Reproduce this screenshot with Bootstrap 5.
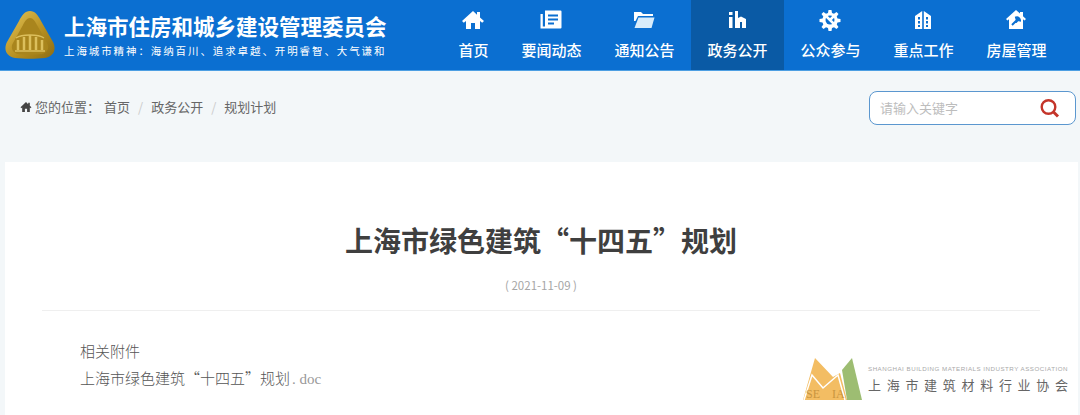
<!DOCTYPE html>
<html lang="zh-CN">
<head>
  <meta charset="UTF-8">
  <title>上海市绿色建筑“十四五”规划</title>
  <link href="https://cdn.jsdelivr.net/npm/bootstrap@5.3.3/dist/css/bootstrap.min.css" rel="stylesheet">
  <style>
    body {
      background: #f3f7f9;
      font-family: "Noto Sans CJK SC", "Liberation Sans", sans-serif;
      height: 415px;
      overflow: hidden;
      position: relative;
    }
    .site-head {
      background: #0b6fd1;
      height: 71px;
      border-bottom: 1px solid #4d9fe3;
    }
    .site-logo { width: 52px; height: 50px; margin-left: 4px; margin-right: 8px; }
    .site-title { color: #fff; font-size: 21.5px; font-weight: 700; line-height: 26px; white-space: nowrap; }
    .site-motto { color: #fff; font-size: 10.5px; letter-spacing: 1.9px; line-height: 14px; margin-top: 5px; white-space: nowrap; }
    .head-nav { margin-right: 17px; }
    .head-link {
      color: #fff;
      font-size: 15px;
      font-weight: 500;
      text-decoration: none;
      padding: 9px 16.5px 0;
      line-height: 20px;
    }
    .head-link svg { width: 22px; height: 22px; display: block; margin-bottom: 9px; }
    .head-link.current { background: #0a5aa5; }
    .crumb-row { height: 91px; padding: 0 4px 17px 20px; }
    .crumb-row .breadcrumb { font-size: 13px; color: #666; margin: 0 0 2px; line-height: 20px; }
    .crumb-row .breadcrumb-item a { color: #666; text-decoration: none; }
    .crumb-row .breadcrumb-item.active { color: #666; }
    .crumb-row .breadcrumb-item + .breadcrumb-item { padding-left: 8px; }
    .crumb-row .breadcrumb-item + .breadcrumb-item::before { color: #ccc; padding-right: 8px; }
    .crumb-label { margin-right: 4px; }
    .crumb-home { width: 12px; height: 12px; margin: 0 3px 2px 0; }
    .find-box {
      width: 207px;
      height: 34px;
      background: #fff;
      border: 1px solid #5b97cf;
      border-radius: 8px;
      padding: 0 15px 0 10px;
    }
    .find-box input {
      border: 0;
      outline: 0;
      font-size: 13px;
      min-width: 0;
      width: 150px;
      padding: 0;
      background: transparent;
    }
    .find-box input::placeholder { color: #bdbdbd; }
    .find-box svg { width: 21px; height: 21px; }
    .doc-sheet {
      background: #fff;
      margin: 0 2px 0 5px;
      height: 253px;
      padding: 0 38px 0 37px;
    }
    .doc-title {
      font-size: 28px;
      font-weight: 700;
      color: #3f3f3f;
      line-height: 40px;
      padding-top: 58px;
      margin: 0;
      height: 98px;
      box-sizing: border-box;
    }
    .doc-date { color: #a6a6a6; font-size: 11.5px; line-height: 18px; margin-top: 16px; height: 34px; }
    .doc-body {
      border-top: 1px solid #efefef;
      padding: 26px 0 0 38px;
      font-size: 15px;
      line-height: 27px;
      color: #555;
      font-weight: 300;
    }
    .doc-ext { color: #999; font-family: "Liberation Serif", serif; font-weight: 400; margin-left: 2px; }
    .assoc-mark {
      position: absolute;
      left: 803px;
      top: 357px;
    }
    .assoc-mark svg { width: 60px; height: 44px; margin-right: 5px; }
    .assoc-en { font-family: "Liberation Sans", sans-serif; font-size: 6.2px; letter-spacing: .5px; color: #a9a9a9; line-height: 8px; white-space: nowrap; }
    .assoc-zh { font-size: 13px; letter-spacing: 5.7px; color: #666; line-height: 16px; margin-top: 4px; white-space: nowrap; }
    .assoc-letters { font-family: "Liberation Serif", serif; font-size: 12px; fill: #c9953f; }
  </style>
</head>
<body>
  <header class="site-head d-flex justify-content-between">
    <div class="d-flex align-items-center">
      <svg class="site-logo" viewBox="0 0 52 50">
        <defs>
          <linearGradient id="goldFill" x1="0" y1="0" x2="1" y2="1">
            <stop offset="0" stop-color="#e6c75a"/>
            <stop offset=".6" stop-color="#b38c1e"/>
            <stop offset="1" stop-color="#8c6c14"/>
          </linearGradient>
        </defs>
        <path d="M26 1C21 1 18 5 15 11L3 32C-1 40 3 47 11 48C20 49 32 49 41 48C49 47 53 40 49 32L37 11C34 5 31 1 26 1Z" fill="url(#goldFill)"/>
        <path d="M26 8C23 8 21 11 19 15L9 33C6 38 9 43 14 44C22 45 30 45 38 44C43 43 46 38 43 33L33 15C31 11 29 8 26 8Z" fill="#a9851d"/>
        <path d="M14 40V30M20 40V27M26 40V25M32 40V27M38 40V30" stroke="#dcbf5c" stroke-width="2.500"/>
        <path d="M11 41H41" stroke="#dcbf5c" stroke-width="1.500"/>
        <path d="M12 28C18 24 34 24 40 28" stroke="#dcbf5c" stroke-width="1.500" fill="none"/>
      </svg>
      <div>
        <div class="site-title">上海市住房和城乡建设管理委员会</div>
        <div class="site-motto">上海城市精神：海纳百川、追求卓越、开明睿智、大气谦和</div>
      </div>
    </div>
    <nav class="head-nav d-flex">
      <a class="head-link d-flex flex-column align-items-center" href="#">
        <svg viewBox="0 0 22 22" fill="#fff"><path d="M11 2L0 12l1.800 1.800L4 12v8h5v-6h4v6h5v-8l2.200 1.800L22 12l-4-3.600V3h-3v2.800z"/></svg>
        首页
      </a>
      <a class="head-link d-flex flex-column align-items-center" href="#">
        <svg viewBox="0 0 22 22"><path d="M5 1.500h15.500a1 1 0 0 1 1 1v16a1 1 0 0 1-1 1H.5V5h2.300v12.500H5z" fill="#fff"/><path d="M8 5.500h10v2H8zM8 9.500h10v2H8zM8 13.500h6v2H8z" fill="#0b6fd1"/></svg>
        要闻动态
      </a>
      <a class="head-link d-flex flex-column align-items-center" href="#">
        <svg viewBox="0 0 22 22" fill="#fff"><path d="M1 3h7l2 2h10v2H5L2.500 12H1z"/><path d="M5.500 8.500H21.500l-3 10.500H1.500z" fill="#d8ecfb"/></svg>
        通知公告
      </a>
      <a class="head-link current d-flex flex-column align-items-center" href="#">
        <svg viewBox="0 0 22 22" fill="#fff"><path d="M3 3h3.500v3H3zM3 8h3.500v11H3zM9 2h3v7l3-1.500 5 2.500v9h-4v-6h-2v6H9z"/></svg>
        政务公开
      </a>
      <a class="head-link d-flex flex-column align-items-center" href="#">
        <svg viewBox="0 0 22 22"><path d="M9.500 1h3l.5 3 2 .8 2.500-1.800 2 2-1.800 2.500.8 2 3 .5v3l-3 .5-.8 2 1.800 2.500-2 2-2.500-1.800-2 .8-.5 3h-3l-.5-3-2-.8-2.500 1.800-2-2 1.800-2.500-.8-2-3-.5v-3l3-.5.8-2L2.500 5l2-2L7 4.800 9 4z" fill="#fff"/><circle cx="11" cy="11" r="4.500" fill="#0b6fd1"/><path d="M6 6l11 11M16 6l-5 5" stroke="#fff" stroke-width="2.500"/></svg>
        公众参与
      </a>
      <a class="head-link d-flex flex-column align-items-center" href="#">
        <svg viewBox="0 0 22 22"><path d="M10.200 2v18H3V7zM11.800 2L19 7v13h-7.200z" fill="#fff"/><path d="M6 8h2v2.500H6zM6 12h2v2.500H6zM14 8h2v2.500h-2zM14 12h2v2.500h-2zM6 16h2v2H6zM14 16h2v2h-2z" fill="#0b6fd1"/></svg>
        重点工作
      </a>
      <a class="head-link d-flex flex-column align-items-center" href="#">
        <svg viewBox="0 0 22 22"><path d="M11 1L1 10l1.500 1.500L4 10.300V20h14v-9.700l1.500 1.200L21 10l-3-2.700V3h-3v1.600z" fill="#fff"/><path d="M7 16l5-5M11 8.500a3 3 0 0 1 4 3l-2-.5-1 1z" stroke="#0b6fd1" stroke-width="2" fill="#0b6fd1"/></svg>
        房屋管理
      </a>
    </nav>
  </header>

  <div class="crumb-row d-flex justify-content-between align-items-center">
    <div class="d-flex align-items-center">
      <svg class="crumb-home" viewBox="0 0 22 22" fill="#444"><path d="M11 2L1 11.500l1.600 1.600L4 12v8h5v-6h4v6h5v-8l1.400 1.100 1.600-1.600L18 8.600V3h-3v2.800z"/></svg>
      <ol class="breadcrumb align-items-center">
        <li class="crumb-label">您的位置：</li>
        <li class="breadcrumb-item"><a href="#">首页</a></li>
        <li class="breadcrumb-item"><a href="#">政务公开</a></li>
        <li class="breadcrumb-item active">规划计划</li>
      </ol>
    </div>
    <div class="find-box d-flex align-items-center justify-content-between">
      <input type="text" placeholder="请输入关键字">
      <svg viewBox="0 0 21 21" fill="none" stroke="#c4352a"><circle cx="9.500" cy="9" r="6.800" stroke-width="2.400"/><path d="M14.500 14l4.500 4.500" stroke-width="3"/></svg>
    </div>
  </div>

  <main class="doc-sheet">
    <h1 class="doc-title text-center">上海市绿色建筑“十四五”规划</h1>
    <div class="doc-date text-center">( 2021-11-09 )</div>
    <div class="doc-body">
      <div>相关附件</div>
      <div>上海市绿色建筑“十四五”规划<span class="doc-ext">. doc</span></div>
    </div>
  </main>

  <div class="assoc-mark d-flex align-items-center">
    <svg viewBox="0 0 60 44">
      <path d="M0 43L12 1 30 20 37 16 44 43z" fill="#f3bd63"/>
      <path d="M39 13L49 1 59 43H44z" fill="#9dbd72"/>
      <path d="M1 43L9 18 20 31 35 18 42 43" fill="none" stroke="#fff" stroke-width="1.500"/>
      <text class="assoc-letters" x="3" y="41">SE</text>
      <text class="assoc-letters" x="29" y="41">IA</text>
    </svg>
    <div>
      <div class="assoc-en">SHANGHAI BUILDING MATERIALS INDUSTRY ASSOCIATION</div>
      <div class="assoc-zh">上海市建筑材料行业协会</div>
    </div>
  </div>

  <script src="https://cdn.jsdelivr.net/npm/bootstrap@5.3.3/dist/js/bootstrap.bundle.min.js"></script>
</body>
</html>
